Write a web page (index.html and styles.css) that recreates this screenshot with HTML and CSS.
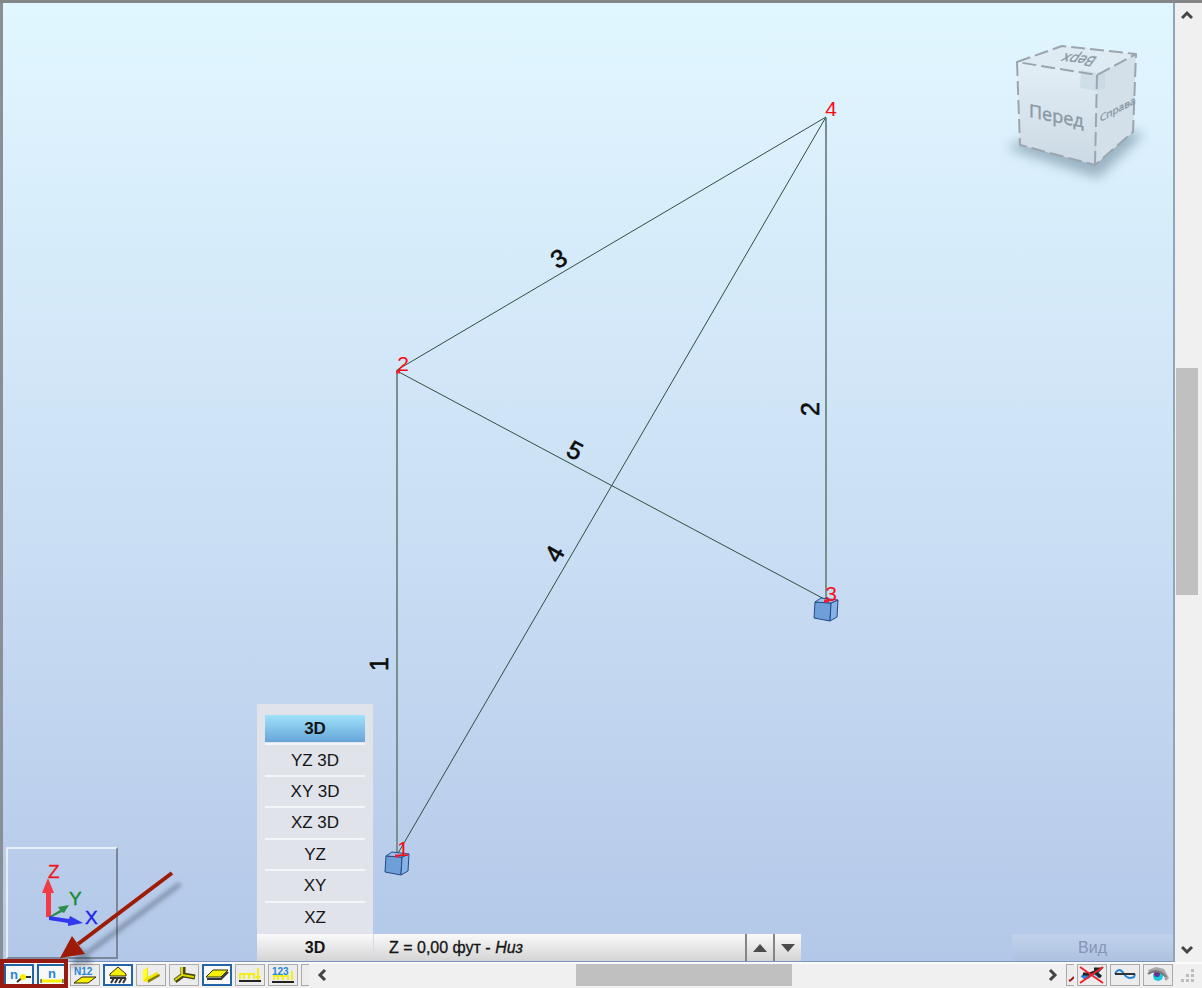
FILE: index.html
```html
<!DOCTYPE html>
<html lang="ru">
<head>
<meta charset="utf-8">
<title>3D</title>
<link rel="stylesheet" href="styles.css">
</head>
<body>
<div class="window">
  <div class="work">
    <main class="viewport">
      <svg class="model" width="100%" height="100%">
        <g class="bars">
          <path class="column" d="M394 367V852M823 115V597"/>
          <path d="M394 367L823 114L394 852M394 368L823 597"/>
        </g>
        <g class="supports">
          <g transform="translate(394 860)">
            <path class="face" d="M-11-7L5-6 4 12-12 9Z"/><path class="side" d="M5-6L12-9 11 8 4 12Z"/><path class="top" d="M-11-7L-5-11 12-9 5-6Z"/>
          </g>
          <g transform="translate(823 606)">
            <path class="face" d="M-11-7L5-6 4 12-12 9Z"/><path class="side" d="M5-6L12-9 11 8 4 12Z"/><path class="top" d="M-11-7L-5-11 12-9 5-6Z"/>
          </g>
          <path class="joint" d="M392 853h4M821 598h5M393 369h4"/>
        </g>
        <g class="node-labels">
          <text x="400" y="853">1</text>
          <text x="400" y="368">2</text>
          <text x="828" y="598">3</text>
          <text x="828" y="113">4</text>
        </g>
        <g class="bar-labels">
          <text transform="translate(385 661) rotate(-90)">1</text>
          <text transform="translate(816 406) rotate(-90)">2</text>
          <text transform="translate(560 263) rotate(-30)">3</text>
          <text transform="translate(559 555) rotate(-60)">4</text>
          <text transform="translate(568 455) rotate(28)">5</text>
        </g>
      </svg>

      <svg class="cube" width="150" height="150" viewBox="0 0 150 150">
        <defs>
          <linearGradient id="front" x2="0" y2="1"><stop offset="0" stop-color="#e3eef6"/><stop offset="1" stop-color="#cbd9e4"/></linearGradient>
          <filter id="soft" x="-30%" y="-50%" width="160%" height="200%"><feGaussianBlur stdDeviation="6"/></filter>
        </defs>
        <path class="cube-shadow" filter="url(#soft)" d="M6 108L70 80 144 94 98 138Z"/>
        <path fill="url(#front)" d="M17 22L97 35 95 125 20 105Z"/>
        <path fill="#d3e0ea" d="M97 35L136 14 133 92 95 125Z"/>
        <path fill="#dfebf3" d="M17 22L62 6 136 14 97 35Z"/>
        <path class="corner" d="M81 30L97 33 105 31V48L97 51 80 48Z"/>
        <path class="edges" d="M17 22L62 6 136 14 97 35ZM17 22L20 105 95 125 133 92 136 14M97 35L95 125"/>
        <text class="cube-front" transform="translate(29 77) skewY(11)">Перед</text>
        <text class="cube-right" transform="translate(100 82) skewY(-28)">Справа</text>
        <text class="cube-top" transform="translate(98 17) rotate(186) skewX(-30)">Верх</text>
      </svg>

      <div class="dock">
        <div class="axes">
          <svg width="108" height="108" viewBox="0 0 108 108">
            <path fill="#f13b45" d="M38 68V44H34L40 29 46 44H43V68Z"/>
            <path fill="#2e8d4a" d="M42 67L52 61 50 58 61 56 56 64 54 63 44 68Z"/>
            <path fill="#3138f0" d="M41 67L61 70 62 67 75 74 60 77 60 74 41 71Z"/>
            <text x="40" y="29" fill="#f01820" stroke="#f01820">Z</text>
            <text x="61" y="56" fill="#138a2c" stroke="#138a2c">Y</text>
            <text x="77" y="75" fill="#1c20ee" stroke="#1c20ee">X</text>
          </svg>
        </div>
        <nav class="projection">
          <ul class="views">
            <li><button class="view current">3D</button></li>
            <li><button class="view">YZ 3D</button></li>
            <li><button class="view">XY 3D</button></li>
            <li><button class="view">XZ 3D</button></li>
            <li><button class="view">YZ</button></li>
            <li><button class="view">XY</button></li>
            <li><button class="view">XZ</button></li>
          </ul>
          <button class="chosen">3D</button>
        </nav>
        <div class="level">
          <button class="level-name">Z = 0,00 фут - <i>Низ</i></button>
          <button class="step" aria-label="Выше"><svg width="14" height="8" viewBox="0 0 14 8"><path d="M7 0L14 8H0Z"/></svg></button>
          <button class="step" aria-label="Ниже"><svg width="14" height="8" viewBox="0 0 14 8"><path d="M0 0H14L7 8Z"/></svg></button>
        </div>
        <button class="view-menu">Вид</button>
      </div>
    </main>

    <div class="vscroll">
      <button class="arrow" aria-label="Вверх"><svg width="12" height="10" viewBox="0 0 12 10"><path d="M1 8L6 3 11 8"/></svg></button>
      <div class="track"><div class="thumb"></div></div>
      <button class="arrow" aria-label="Вниз"><svg width="12" height="10" viewBox="0 0 12 10"><path d="M1 2L6 7 11 2"/></svg></button>
    </div>
  </div>

  <footer class="toolbar">
    <div class="tools">
      <button class="tool on" aria-label="Номера узлов"><svg viewBox="0 0 26 18"><text class="n" x="4" y="13">n</text><path class="k" d="M11 16L17 11H25"/><circle cx="17" cy="11" r="3" fill="#f6f000"/></svg></button>
      <button class="tool on" aria-label="Номера стержней"><svg viewBox="0 0 26 18"><text class="n" x="9" y="12">n</text><path d="M2 15H24" stroke="#f6f000" stroke-width="3"/><path d="M2 13V17M24 13V17" stroke="#222" stroke-width="1"/></svg></button>
      <button class="tool" aria-label="N12"><svg viewBox="0 0 28 20"><text x="3" y="10">N12</text><path class="y" d="M11 12H25L17 18H3Z" stroke-width="2"/></svg></button>
      <button class="tool on" aria-label="Опоры"><svg viewBox="0 0 26 18"><path class="y" d="M13 1L21 8V10H5V8Z"/><path class="k" d="M5 12H21M9 12L6 17M13 12L10 17M17 12L14 17M21 12L18 17"/></svg></button>
      <button class="tool" aria-label="Сечения"><svg viewBox="0 0 28 20"><path fill="#f2e400" d="M6 6L11 2V12L20 7 23 10 11 17 6 16Z"/><path fill="#817b10" d="M11 15L22 9 23 11 11 18Z"/><path fill="#ffff30" d="M6 6L10 3V12L6 16Z"/></svg></button>
      <button class="tool" aria-label="Локальные системы"><svg viewBox="0 0 28 20"><path d="M13 2V10L25 12M13 10L5 16" fill="none" stroke="#46480c" stroke-width="5"/><path d="M12 2V10L24 12M12 10L5 15" fill="none" stroke="#e0da00" stroke-width="2"/></svg></button>
      <button class="tool on" aria-label="Панели"><svg viewBox="0 0 26 18"><path class="y" d="M9 4H24L17 11H2Z" stroke-width="2"/><path class="k" d="M3 13H17L24 6"/></svg></button>
      <button class="tool" aria-label="Нагрузки"><svg viewBox="0 0 28 20"><g class="load"><path d="M4 14V9H18V14M8 9V14M13 9V14M22 3V14M20 11L22 14 24 11"/></g><path d="M3 16H25" stroke="#222" stroke-width="2"/></svg></button>
      <button class="tool" aria-label="Значения нагрузок"><svg viewBox="0 0 28 20"><g class="load"><path d="M5 15V11H19V15M9 11V15M14 11V15M23 6V15"/></g><path d="M3 17H25" stroke="#222" stroke-width="2"/><text x="3" y="10">123</text></svg></button>
      <button class="tool cut" aria-label="Ещё"></button>
    </div>
    <div class="hscroll">
      <button class="arrow" aria-label="Влево"><svg width="10" height="12" viewBox="0 0 10 12"><path d="M8 1L3 6 8 11"/></svg></button>
      <div class="track"><div class="thumb"></div></div>
      <button class="arrow" aria-label="Вправо"><svg width="10" height="12" viewBox="0 0 10 12"><path d="M2 1L7 6 2 11"/></svg></button>
    </div>
    <div class="tools">
      <button class="tool cut" aria-label="Назад"><svg viewBox="0 0 7 20"><path d="M2 16L4 15 7 12" fill="none" stroke="#a01818" stroke-width="2"/></svg></button>
      <button class="tool" aria-label="Без деформаций"><svg viewBox="0 0 28 20"><path d="M4 10Q8 14 12 10 17 5 22 12" fill="none" stroke="#2486d8" stroke-width="4"/><path d="M5 9H12L17 7 23 12M16 4H22L18 8" fill="none" stroke="#222" stroke-width="3"/><path d="M2 2L25 18M25 2L2 18" stroke="#f0202c" stroke-width="2"/></svg></button>
      <button class="tool" aria-label="Деформации"><svg viewBox="0 0 28 20"><path d="M4 9Q8 1 13 9 17 15 23 12L24 9" fill="none" stroke="#2486d8" stroke-width="2"/><path d="M4 9H24" stroke="#333" stroke-width="2"/></svg></button>
      <button class="tool" aria-label="Отображение"><svg viewBox="0 0 28 20"><path fill="#aaa5a8" d="M4 5L12 2 20 4 25 13 22 16 18 10 5 8Z"/><path fill="#f4f4f4" d="M5 10Q13 3 22 12 14 19 5 10Z"/><circle cx="14" cy="11" r="5" fill="#19c9e0"/><circle cx="13" cy="9" r="3" fill="#653094"/><path d="M4 9Q13 2 22 12" fill="none" stroke="#777" stroke-width="2"/></svg></button>
    </div>
    <svg class="grip" width="14" height="14" viewBox="0 0 14 14"><path d="M10 1h3v3h-3ZM5 6h3v3h-3ZM10 6h3v3h-3ZM0 11h3v3h-3ZM5 11h3v3h-3ZM10 11h3v3h-3Z"/></svg>
  </footer>

  <svg class="callout" width="200" height="128" viewBox="0 0 200 128">
    <defs><filter id="blur" x="-20%" y="-20%" width="140%" height="140%"><feGaussianBlur stdDeviation="2"/></filter></defs>
    <g filter="url(#blur)" opacity=".35"><path d="M180 24L86 94" stroke="#234" stroke-width="5"/><path fill="#234" d="M70 108L80 86 94 103Z"/></g>
    <path d="M172 13L78 84" stroke="#9e1b06" stroke-width="4"/>
    <path fill="#9e1b06" d="M60 98L72 76 85 94Z"/>
    <path d="M2 101H66V126H2Z" fill="none" stroke="#98190f" stroke-width="4"/>
  </svg>
</div>
</body>
</html>
```
FILE: styles.css
```css
* { box-sizing: border-box; }
body { margin: 0; font-family: "Liberation Sans", Arial, sans-serif; font-size: 17px; color: #151515; }
button { margin: 0; padding: 0; border: 0; background: none; font: inherit; color: inherit; }
svg { display: block; }

.window { position: relative; display: flex; flex-direction: column; height: 100vh; background: #f0f0f0; overflow: hidden; }
.work { display: flex; flex: 1; min-height: 0; border-top: 3px solid #858687; }
.viewport {
  position: relative; flex: 1; display: flex; align-items: flex-end;
  border-left: 3px solid #8a8f95; border-right: 2px solid #8fa5b8; border-bottom: 1px solid #7d95bd;
  background: linear-gradient(#e1f7ff, #cce0f5 52%, #b3c8e8);
}

.model { position: absolute; inset: 0; }
.bars path { fill: none; stroke: #304f42; stroke-width: 1; }
.bars .column { stroke: #78908f; stroke-width: 2; }
.supports { stroke: #234a86; stroke-width: 1; stroke-linejoin: round; }
.face { fill: #6f9fd8; }
.side { fill: #86b2e8; }
.top { fill: #9bc1ee; }
.joint { stroke: #f02030; stroke-width: 3; }
.node-labels { font-size: 21px; fill: #f80c14; text-anchor: middle; }
.bar-labels { font-size: 25px; fill: #0c0c0c; stroke: #0c0c0c; stroke-width: 0.6px; text-anchor: middle; }

.cube { position: absolute; top: 37px; right: 23px; }
.cube-shadow { fill: #6f8a9c; opacity: 0.6; }
.corner { fill: #c5d5e0; opacity: 0.6; }
.edges { fill: none; stroke: #9ba5ae; stroke-width: 2; stroke-dasharray: 14 5; stroke-linejoin: round; }
.cube text { font-family: "Open Sans", sans-serif; fill: #8b98a3; stroke: #8b98a3; stroke-width: 0.4px; }
.cube-front { font-size: 18px; }
.cube-right { font-size: 10px; }
.cube-top { font-size: 14px; }

.dock { position: relative; flex: 1; display: flex; align-items: flex-end; }
.axes { margin: 0 139px 2px 3px; border: 2px solid; border-color: #e8eef6 #7b8798 #7b8798 #e8eef6; }
.axes text { font-size: 19px; stroke-width: 0.4px; }
.projection { width: 116px; padding-top: 10px; background: #e0e4ea; text-align: center; }
.views { display: grid; grid-template-rows: repeat(7, 1fr); height: 220px; margin: 0; padding: 0 8px; list-style: none; }
.views li { display: flex; border-bottom: 2px solid #f3f5f8; }
.views li:last-child { border-color: transparent; }
.view { flex: 1; padding-top: 1px; }
.current { margin: 1px 0; background: linear-gradient(#a0e2fb, #66a5d9); font-weight: bold; }
.chosen, .level { height: 27px; background: linear-gradient(#fafafa, #d4d4d4); }
.chosen { display: block; width: 100%; font-size: 16px; font-weight: bold; }
.level { display: flex; width: 428px; border-left: 1px solid #d0dcec; }
.level-name { flex: 1; padding-left: 15px; font-size: 16px; text-align: left; -webkit-text-stroke: 0.3px #151515; }
.step { display: flex; align-items: center; justify-content: center; width: 28px; border-left: 2px solid #858585; fill: #4c4c4c; }
.view-menu { width: 161px; height: 27px; margin-left: auto; background: linear-gradient(#c0d2eb, #aec2e1); font-size: 16px; color: #8396b5; }

.arrow { display: flex; align-items: center; justify-content: center; }
.arrow path { fill: none; stroke: #444; stroke-width: 3; }
.track { flex: 1; display: flex; }
.thumb { background: #c0c0c0; }
.vscroll { display: flex; flex-direction: column; width: 27px; padding: 0 4px 0 1px; }
.vscroll .arrow { height: 24px; }
.vscroll .track { flex-direction: column; }
.vscroll .track::before { content: ""; flex: 341; }
.vscroll .thumb { flex: 227; }
.vscroll .track::after { content: ""; flex: 343; }

.toolbar { display: flex; align-items: center; height: 26px; padding: 0 7px 2px 4px; border-top: 2px solid #fafafa; }
.tools { display: flex; gap: 3px; }
.tool { width: 30px; height: 22px; border: 1px solid #aaa; background: #ececec; }
.tool.on { border: 2px solid #2466a5; background: #f7f9fb; }
.tool svg { width: 100%; height: 100%; }
.tool.cut { width: 8px; border-right: 0; }
.tool text { font-size: 10px; font-weight: bold; fill: #2486d8; }
.tool .n { font-size: 13px; }
.k { fill: none; stroke: #333; stroke-width: 2; }
.y { fill: #f6ef08; stroke: #332f05; stroke-width: 1; }
.load { fill: none; stroke: #f4ee20; stroke-width: 2; }
.hscroll { display: flex; flex: 1; height: 22px; }
.hscroll .arrow { width: 26px; }
.hscroll .track::before { content: ""; flex: 242; }
.hscroll .thumb { flex: 217; }
.hscroll .track::after { content: ""; flex: 249; }
.grip { margin-left: 8px; fill: #bdbdbd; }
.callout { position: absolute; left: 0; bottom: 0; pointer-events: none; }
```
